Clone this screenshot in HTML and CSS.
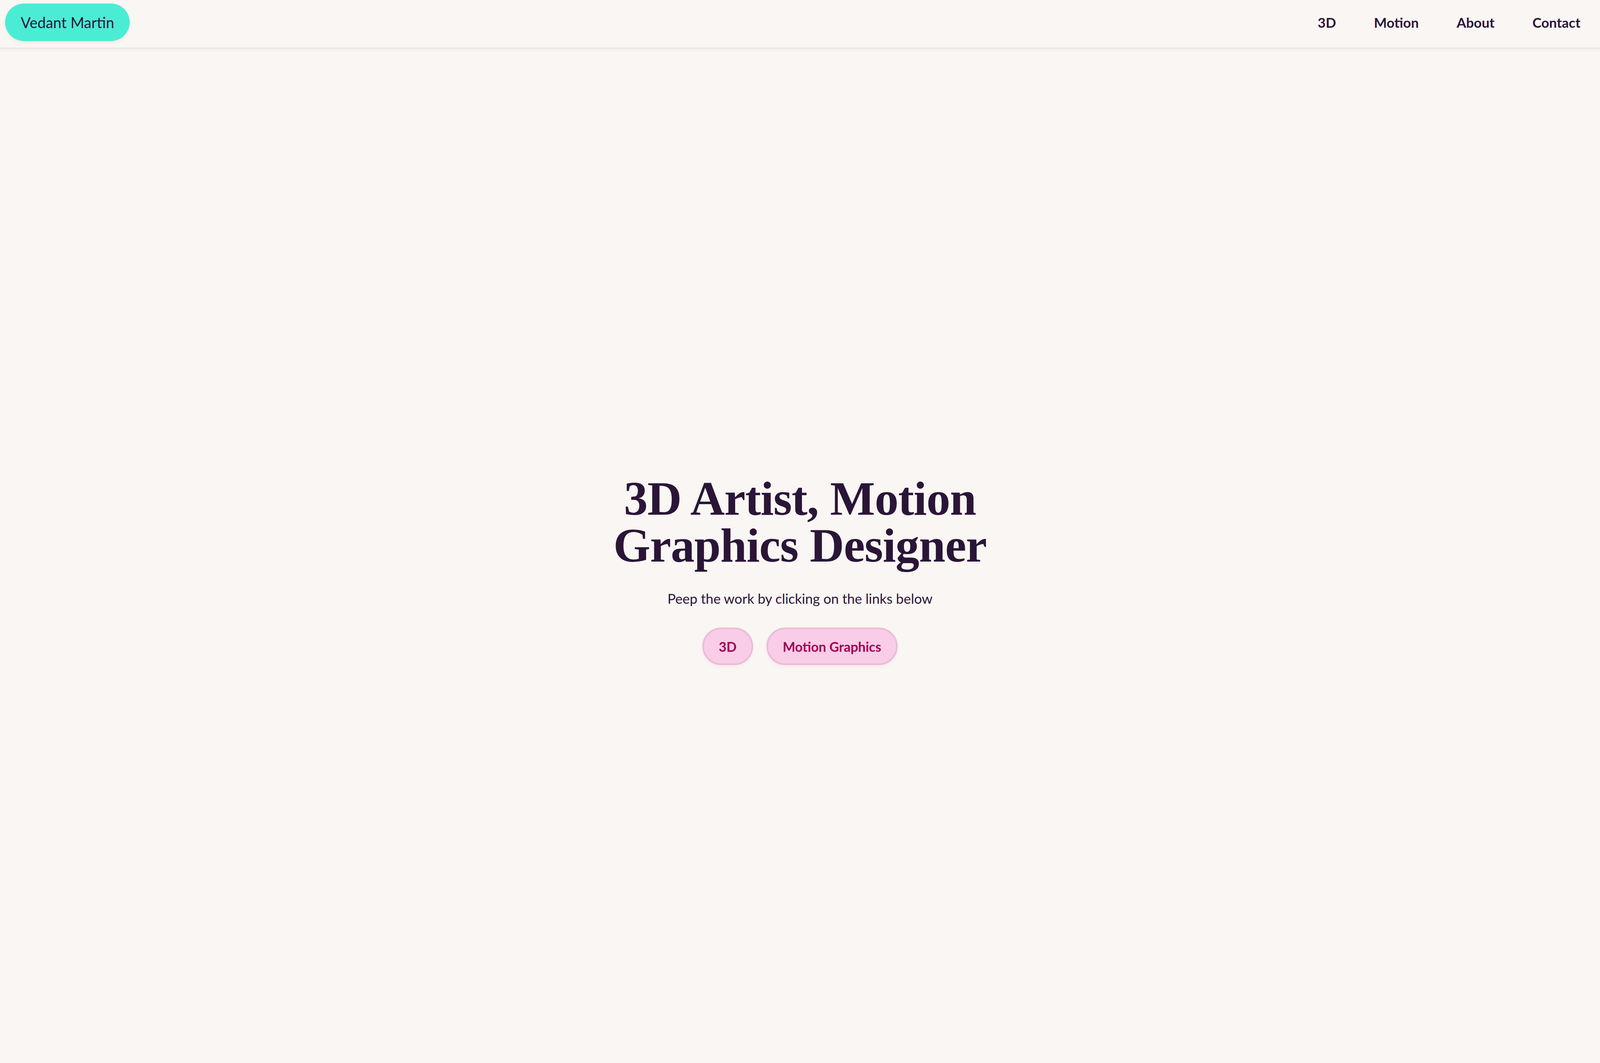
FILE: index.html
```html
<!DOCTYPE html>
<html lang="en">
<head>
<meta charset="utf-8">
<title>Vedant Martin</title>
<link rel="stylesheet" href="styles.css">
</head>
<body>
<header class="site-header">
  <a class="brand" href="#">Vedant Martin</a>
  <nav class="nav">
    <a href="#">3D</a>
    <a href="#">Motion</a>
    <a href="#">About</a>
    <a href="#">Contact</a>
  </nav>
</header>
<main class="hero">
  <h1 class="hero-title">3D Artist, Motion<br>Graphics Designer</h1>
  <p class="hero-sub">Peep the work by clicking on the links below</p>
  <div class="hero-links">
    <a class="chip" href="#">3D</a>
    <a class="chip" href="#">Motion Graphics</a>
  </div>
</main>
</body>
</html>
```
FILE: styles.css
```css
* { box-sizing: border-box; }
html, body { margin: 0; padding: 0; }
body {
  background: #faf6f3;
  color: #2a1537;
  font-family: "Lato", "Noto Sans", sans-serif;
  min-height: 100vh;
  display: flex;
  flex-direction: column;
}
a { text-decoration: none; color: inherit; }

.site-header {
  flex: 0 0 124px;
  display: flex;
  align-items: center;
  justify-content: space-between;
  padding: 0 50px 0 13px;
  border-bottom: 2px solid #e8e3e0;
  box-shadow: 0 3px 6px rgba(0,0,0,0.05);
}
.brand {
  display: flex;
  align-items: center;
  height: 96px;
  padding: 0 40px;
  margin-top: -8px;
  background: #4aedd4;
  border-radius: 48px;
  font-size: 38px;
  font-weight: 400;
  color: #2a1537;
  box-shadow: 0 4px 8px rgba(0,0,0,0.06);
}
.nav {
  display: flex;
  gap: 97px;
  margin-top: -8px;
}
.nav a {
  font-size: 35px;
  font-weight: 700;
  color: #2a1537;
}

.hero {
  flex: 1;
  display: flex;
  flex-direction: column;
  align-items: center;
  justify-content: center;
  padding-top: 74px;
}
.hero-title {
  margin: 0;
  font-family: "Liberation Serif", "Times New Roman", serif;
  font-weight: 700;
  font-size: 122px;
  line-height: 120px;
  text-align: center;
  color: #2a1537;
  letter-spacing: -1px;
}
.hero-sub {
  margin: 54px 0 0;
  font-size: 35px;
  font-weight: 400;
  color: #2a1537;
}
.hero-links {
  display: flex;
  gap: 34px;
  margin-top: 54px;
}
.chip {
  display: flex;
  align-items: center;
  height: 96px;
  padding: 0 38px;
  border: 4px solid #e8bdd9;
  border-radius: 48px;
  background: #f9cce7;
  color: #a3004f;
  font-size: 34px;
  font-weight: 700;
  box-shadow: 0 4px 8px rgba(200,80,150,0.08);
}
```
